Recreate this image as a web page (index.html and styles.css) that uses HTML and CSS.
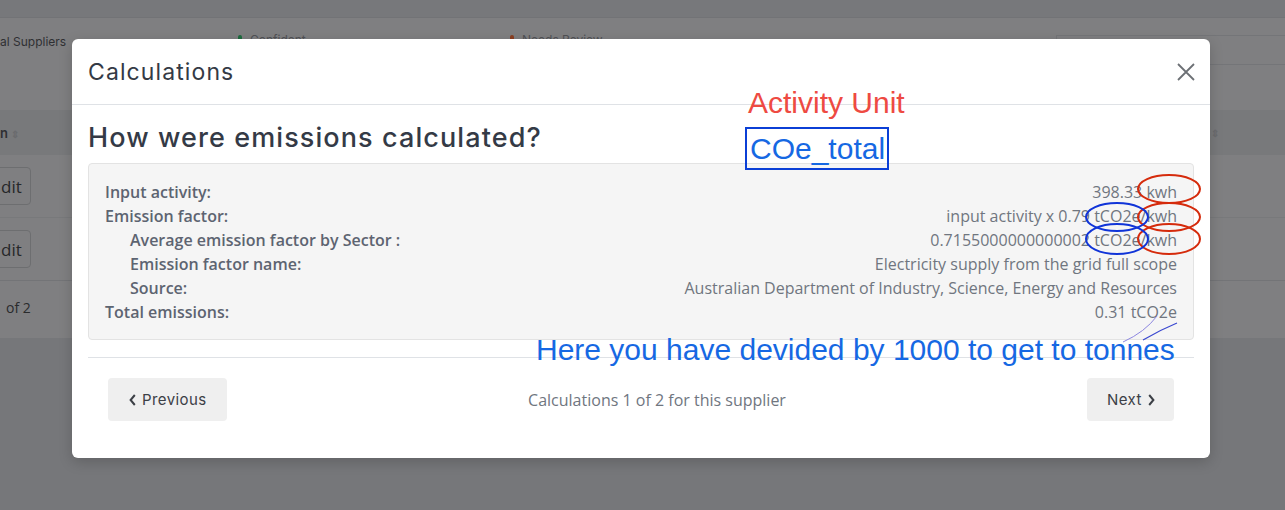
FILE: index.html
```html
<!DOCTYPE html>
<html lang="en">
<head>
<meta charset="utf-8">
<title>Calculations</title>
<link rel="stylesheet" href="styles.css">
</head>
<body>
<div class="page">
  <div class="topbar"></div>
  <div class="card">
    <div class="filters">
      <span class="filter-label">al Suppliers</span>
      <span class="filter-item"><span class="dot green"></span>Confident</span>
      <span class="filter-item"><span class="dot orange"></span>Needs Review</span>
      <span class="filter-input"></span>
    </div>
    <div class="thead">
      <span class="th">n <span class="sort">&#8661;</span></span>
      <span class="sort right">&#8661;</span>
    </div>
    <div class="trow"><span class="btn-edit">dit</span></div>
    <div class="trow"><span class="btn-edit">dit</span></div>
    <div class="pager">of 2</div>
  </div>
</div>

<div class="modal">
  <div class="modal-header">
    <h2 class="modal-title">Calculations</h2>
    <svg class="close" width="18" height="18" viewBox="0 0 18 18"><path d="M1 1 L17 17 M17 1 L1 17" stroke="#6c7075" stroke-width="1.8" fill="none"/></svg>
  </div>
  <div class="modal-body">
    <h1 class="calc-title">How were emissions calculated?</h1>
    <div class="calc-box">
      <div class="row"><span class="lbl">Input activity:</span><span class="val">398.33 kwh</span></div>
      <div class="row"><span class="lbl">Emission factor:</span><span class="val">input activity x 0.79 tCO2e/kwh</span></div>
      <div class="row sub"><span class="lbl">Average emission factor by Sector :</span><span class="val">0.7155000000000002 tCO2e/kwh</span></div>
      <div class="row sub"><span class="lbl">Emission factor name:</span><span class="val">Electricity supply from the grid full scope</span></div>
      <div class="row sub"><span class="lbl">Source:</span><span class="val">Australian Department of Industry, Science, Energy and Resources</span></div>
      <div class="row"><span class="lbl">Total emissions:</span><span class="val">0.31 tCO2e</span></div>
    </div>
  </div>
  <div class="modal-footer">
    <button class="nav-btn prev"><svg width="7" height="12" viewBox="0 0 7 12"><path d="M5.8 1 L1.6 6 L5.8 11" fill="none" stroke="#3c4046" stroke-width="2"/></svg>Previous</button>
    <span class="counter">Calculations 1 of 2 for this supplier</span>
    <button class="nav-btn next">Next<svg width="7" height="12" viewBox="0 0 7 12"><path d="M1.2 1 L5.4 6 L1.2 11" fill="none" stroke="#3c4046" stroke-width="2"/></svg></button>
  </div>
</div>

<div class="note note-red">Activity Unit</div>
<div class="note note-box">COe_total</div>
<div class="note note-blue">Here you have devided by 1000 to get to tonnes</div>

<svg class="marks" width="1285" height="510" viewBox="0 0 1285 510">
  <ellipse cx="1169" cy="189" rx="31" ry="14" fill="none" stroke="#d52b0c" stroke-width="2"/>
  <ellipse cx="1169" cy="217" rx="31" ry="14" fill="none" stroke="#d52b0c" stroke-width="2"/>
  <ellipse cx="1169" cy="239" rx="31" ry="15" fill="none" stroke="#d52b0c" stroke-width="2"/>
  <ellipse cx="1117" cy="217" rx="31" ry="14" fill="none" stroke="#1034d8" stroke-width="2"/>
  <ellipse cx="1117" cy="239" rx="31" ry="15" fill="none" stroke="#1034d8" stroke-width="2"/>
  <path d="M1123 342 Q1145 332 1157 316" fill="none" stroke="#8c86e0" stroke-width="1"/>
  <path d="M1143 340 Q1160 330 1177 323" fill="none" stroke="#3a48d0" stroke-width="1.3"/>
</svg>
</body>
</html>
```

FILE: styles.css
```css
html, body {
  margin: 0;
  padding: 0;
}
body {
  width: 1285px;
  height: 510px;
  overflow: hidden;
  background: #76777a;
  font-family: "Open Sans", "Liberation Sans", sans-serif;
  position: relative;
}
.page {
  display: flex;
  flex-direction: column;
}
.topbar {
  height: 17px;
  background: #77787b;
  border-bottom: 1px solid #727376;
}
.card {
  height: 320px;
  background: #7f7f81;
  display: flex;
  flex-direction: column;
}
.filters {
  height: 92px;
  display: flex;
  align-items: flex-start;
  padding-top: 14px;
  box-sizing: border-box;
  font-size: 12px;
  color: #2f3033;
  font-family: "Inter", "Liberation Sans", sans-serif;
}
.filter-label {
  margin-top: 2px;
  width: 238px;
}
.filter-item {
  display: flex;
  align-items: center;
  gap: 8px;
  width: 272px;
  color: #505155;
}
.dot {
  width: 4px;
  height: 10px;
  border-radius: 2px;
}
.dot.green { background: #1e6b3e; }
.dot.orange { background: #8a3f22; }
.filter-input {
  margin-left: auto;
  width: 228px;
  height: 28px;
  margin-top: 3px;
  border: 1px solid #747578;
  border-right: none;
}
.thead {
  height: 45px;
  background: #78797b;
  display: flex;
  align-items: center;
  justify-content: space-between;
  font-size: 13px;
  color: #2f3033;
  font-family: "Inter", "Liberation Sans", sans-serif;
  font-weight: 600;
}
.sort {
  font-size: 10px;
  color: #6a6b6e;
}
.sort.right {
  margin-right: 66px;
}
.trow {
  height: 62px;
  display: flex;
  align-items: center;
  border-bottom: 1px solid #78797b;
}
.trow + .trow {
  border-bottom: 1px solid #737477;
}
.btn-edit {
  margin-left: -10px;
  padding: 0 8px 0 10px;
  height: 38px;
  box-sizing: border-box;
  display: flex;
  align-items: center;
  border: 1px solid #6d6e70;
  border-radius: 4px;
  font-size: 17px;
  color: #262729;
}
.pager {
  flex: 1;
  display: flex;
  align-items: center;
  margin-left: 6px;
  font-size: 14px;
  color: #2a2b2d;
  padding-bottom: 4px;
}

/* modal */
.modal {
  position: absolute;
  left: 72px;
  top: 39px;
  width: 1138px;
  height: 419px;
  background: #fff;
  border-radius: 6px;
  box-shadow: 0 4px 14px rgba(0,0,0,0.18);
  display: flex;
  flex-direction: column;
}
.modal-header {
  height: 66px;
  box-sizing: border-box;
  border-bottom: 1px solid #dfe2e6;
  display: flex;
  align-items: center;
  justify-content: space-between;
  padding: 0 15px 0 16px;
}
.modal-title {
  margin: 0;
  font-family: "Inter", "Liberation Sans", sans-serif;
  font-weight: 400;
  font-size: 23px;
  letter-spacing: 1.1px;
  color: #343a45;
}
.close {
  display: block;
  margin-top: 1px;
}
.modal-body {
  padding: 17px 16px 0 16px;
}
.calc-title {
  margin: 0 0 10px 0;
  font-family: "Inter", "Liberation Sans", sans-serif;
  font-weight: 500;
  font-size: 27px;
  line-height: 31px;
  letter-spacing: 1.1px;
  color: #343a46;
}
.calc-box {
  background: #f5f5f5;
  border: 1px solid #e3e3e3;
  border-radius: 4px;
  padding: 16px 16px 15px 16px;
}
.row {
  display: flex;
  justify-content: space-between;
  height: 24px;
  align-items: center;
  font-size: 16px;
}
.row.sub .lbl {
  padding-left: 25px;
}
.lbl {
  font-weight: 600;
  color: #5d6471;
}
.val {
  color: #70767f;
}
.modal-footer {
  margin: 17px 16px 0 16px;
  border-top: 1px solid #dfe2e6;
  padding: 20px 19px 0 20px;
  display: flex;
  align-items: center;
  justify-content: space-between;
}
.nav-btn {
  height: 43px;
  border: none;
  background: #efefef;
  border-radius: 4px;
  display: flex;
  align-items: center;
  gap: 6px;
  font-family: "Inter", "Liberation Sans", sans-serif;
  font-size: 15px;
  letter-spacing: 0.4px;
  color: #3c4046;
}
.nav-btn.prev {
  width: 119px;
  padding: 0 0 0 21px;
}
.nav-btn.next {
  width: 87px;
  padding: 0 0 0 20px;
  margin-right: 1px;
}
.counter {
  font-size: 16px;
  color: #70767f;
}

/* annotations drawn over the screenshot */
.note {
  position: absolute;
  font-family: "Liberation Sans", Arial, sans-serif;
  font-size: 30px;
  line-height: 34px;
  white-space: nowrap;
}
.note-red {
  left: 748px;
  top: 86px;
  color: #ee4a42;
}
.note-box {
  left: 745px;
  top: 127px;
  width: 144px;
  height: 43px;
  box-sizing: border-box;
  padding: 3px 0 0 3px;
  border: 2px solid #0b3fd6;
  color: #1668e3;
}
.note-blue {
  left: 536px;
  top: 333px;
  color: #1668e3;
}
.marks {
  position: absolute;
  left: 0;
  top: 0;
  pointer-events: none;
}
```
